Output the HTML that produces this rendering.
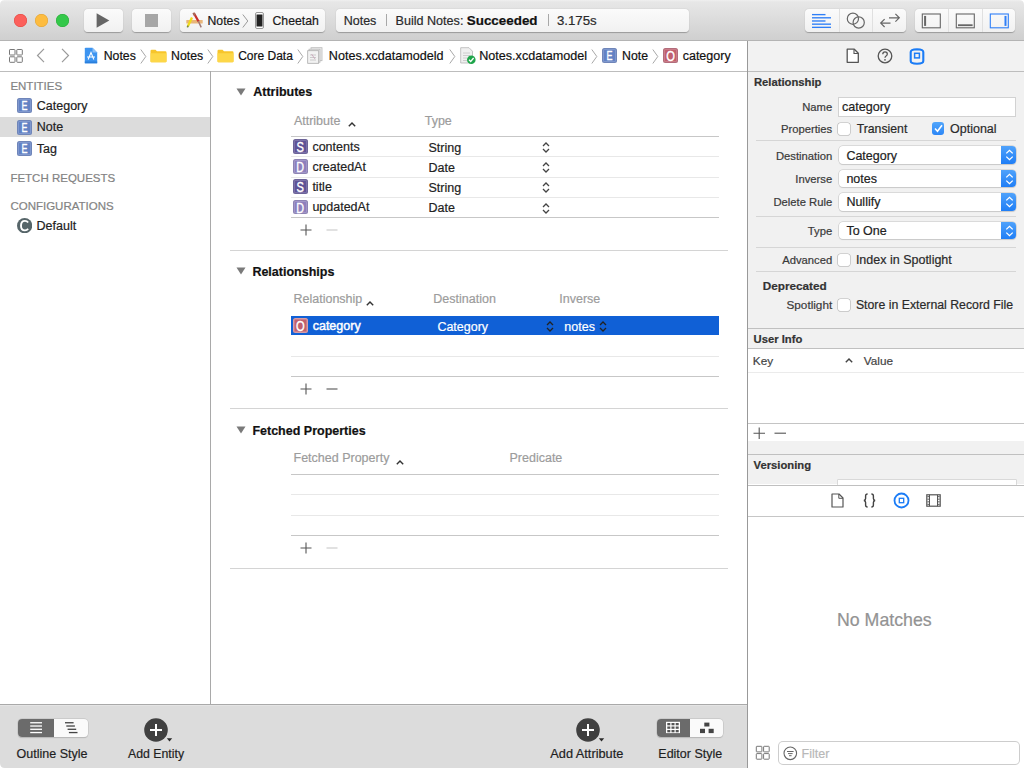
<!DOCTYPE html>
<html><head><meta charset="utf-8"><style>
html,body{margin:0;padding:0;width:1024px;height:768px;overflow:hidden;background:#fff;}
body{position:relative;font-family:"Liberation Sans",sans-serif;}
.t{position:absolute;white-space:nowrap;line-height:1;-webkit-text-stroke:0.2px currentColor;}
</style></head><body>
<div style="position:absolute;left:0px;top:0px;width:1024px;height:40px;background:linear-gradient(#f0f0f0 0px,#e7e7e7 2px,#d0d0d0 39px);"></div>
<div style="position:absolute;left:0px;top:40px;width:1024px;height:1px;background:#b4b4b4;"></div>
<div style="position:absolute;left:14.05px;top:13.95px;width:12.9px;height:12.9px;border-radius:50%;background:#fc605c;box-shadow:inset 0 0 0 0.5px #e0443e;"></div>
<div style="position:absolute;left:35.05px;top:13.95px;width:12.9px;height:12.9px;border-radius:50%;background:#fdbc40;box-shadow:inset 0 0 0 0.5px #dea236;"></div>
<div style="position:absolute;left:56.05px;top:13.95px;width:12.9px;height:12.9px;border-radius:50%;background:#34c84a;box-shadow:inset 0 0 0 0.5px #27aa35;"></div>
<div style="position:absolute;left:84px;top:9px;width:39px;height:23px;border-radius:4px;background:linear-gradient(#fbfbfb,#f1f1f1);box-shadow:0 0.5px 1px rgba(0,0,0,0.28);"></div>
<svg style="position:absolute;left:96px;top:13px" width="14" height="15" viewBox="0 0 14 15"><path d="M0.6 0.3 L13.3 7.5 L0.6 14.7 Z" fill="#666"/></svg>
<div style="position:absolute;left:132px;top:9px;width:39px;height:23px;border-radius:4px;background:linear-gradient(#fbfbfb,#f1f1f1);box-shadow:0 0.5px 1px rgba(0,0,0,0.28);"></div>
<div style="position:absolute;left:145px;top:14px;width:12.6px;height:12.7px;background:#a6a6a6;"></div>
<div style="position:absolute;left:180px;top:9px;width:145px;height:23px;border-radius:4px;background:linear-gradient(#fbfbfb,#f1f1f1);box-shadow:0 0.5px 1px rgba(0,0,0,0.28);"></div>
<svg style="position:absolute;left:184px;top:10px" width="22" height="20" viewBox="0 0 22 20"><rect x="2.3" y="9.9" width="16.4" height="3.6" rx="0.6" fill="#e9b679"/><path d="M9.9 3.3 L14.6 11.5" stroke="#c8302c" stroke-width="2.3" fill="none"/><path d="M14.4 11.2 L17.2 17.4" stroke="#a07a78" stroke-width="1.5" fill="none"/><path d="M9.4 2.8 L10.9 5.6" stroke="#a86a58" stroke-width="2.2" fill="none"/><path d="M8 7.6 L3.9 16.2" stroke="#f0dc1a" stroke-width="2.3" fill="none"/><path d="M4.2 15.6 L3.3 17.3" stroke="#7a8a40" stroke-width="1.6" fill="none"/></svg>
<div class="t" style="left:207.5px;top:14.93px;font-size:12.25px;color:#1a1a1a;font-weight:normal;">Notes</div>
<svg style="position:absolute;left:241.5px;top:13.5px" width="7" height="14" viewBox="0 0 7 14"><path d="M0.8 0.5 L5.8 7.0 L0.8 13.5" fill="none" stroke="#9a9a9a" stroke-width="1"/></svg>
<svg style="position:absolute;left:255px;top:12px" width="9" height="17" viewBox="0 0 9 17"><rect x="0.5" y="0.5" width="8" height="16" rx="1.5" fill="#fff" stroke="#999" stroke-width="1"/><rect x="1.5" y="2.5" width="6" height="12" fill="#222"/></svg>
<div class="t" style="left:272.5px;top:14.93px;font-size:12.25px;color:#1a1a1a;font-weight:normal;">Cheetah</div>
<div style="position:absolute;left:336px;top:9px;width:353px;height:23px;border-radius:4px;background:linear-gradient(#fbfbfb,#f1f1f1);box-shadow:0 0.5px 1px rgba(0,0,0,0.28);"></div>
<div class="t" style="left:343.7px;top:14.62px;font-size:12.5px;color:#2a2a2a;font-weight:normal;">Notes</div>
<div style="position:absolute;left:386px;top:14px;width:1px;height:11.5px;background:#a8a8a8;"></div>
<div class="t" style="left:395.5px;top:15.03px;font-size:12.6px;color:#2a2a2a;font-weight:normal;">Build Notes: </div>
<div class="t" style="left:466.8px;top:14.16px;font-size:13.4px;color:#111;font-weight:bold;">Succeeded</div>
<div style="position:absolute;left:547.5px;top:14px;width:1px;height:11.5px;background:#a8a8a8;"></div>
<div class="t" style="left:556.9px;top:13.98px;font-size:13.25px;color:#2a2a2a;font-weight:normal;">3.175s</div>
<div style="position:absolute;left:805px;top:9px;width:101px;height:23px;border-radius:4px;background:linear-gradient(#fbfbfb,#f1f1f1);box-shadow:0 0.5px 1px rgba(0,0,0,0.28);"></div>
<div style="position:absolute;left:839px;top:9px;width:1px;height:23px;background:#e0e0e0;"></div>
<div style="position:absolute;left:872px;top:9px;width:1px;height:23px;background:#e0e0e0;"></div>
<svg style="position:absolute;left:810px;top:12px" width="24" height="18" viewBox="0 0 24 18"><rect x="2" y="1.95" width="13.5" height="1.35" fill="#2f7ff7"/><rect x="2" y="5.13" width="19" height="1.35" fill="#2f7ff7"/><rect x="2" y="8.31" width="13.5" height="1.35" fill="#2f7ff7"/><rect x="2" y="11.49" width="19" height="1.35" fill="#2f7ff7"/><rect x="2" y="14.67" width="19" height="1.35" fill="#2f7ff7"/></svg>
<svg style="position:absolute;left:844px;top:10px" width="22" height="20" viewBox="0 0 22 20"><circle cx="8.9" cy="8.7" r="5.6" fill="none" stroke="#666" stroke-width="1.2"/><circle cx="14.7" cy="12.5" r="5.6" fill="none" stroke="#666" stroke-width="1.2"/></svg>
<svg style="position:absolute;left:878px;top:11px" width="24" height="18" viewBox="0 0 24 18"><path d="M11 6.8 L21.3 6.8 M17.4 2.9 L21.3 6.8 L17.4 10.7" fill="none" stroke="#666" stroke-width="1.2"/><path d="M12.5 12.1 L2.7 12.1 M6.6 8.2 L2.7 12.1 L6.6 16" fill="none" stroke="#666" stroke-width="1.2"/></svg>
<div style="position:absolute;left:914.5px;top:9px;width:100.5px;height:23px;border-radius:4px;background:linear-gradient(#fbfbfb,#f1f1f1);box-shadow:0 0.5px 1px rgba(0,0,0,0.28);"></div>
<div style="position:absolute;left:948px;top:9px;width:1px;height:23px;background:#e0e0e0;"></div>
<div style="position:absolute;left:982px;top:9px;width:1px;height:23px;background:#e0e0e0;"></div>
<svg style="position:absolute;left:921px;top:12.5px" width="21" height="16" viewBox="0 0 21 16"><rect x="1.3" y="1" width="18" height="13.8" fill="none" stroke="#666" stroke-width="1.1"/><rect x="3.1" y="2.9" width="2" height="10" fill="#666"/></svg>
<svg style="position:absolute;left:955px;top:12.5px" width="21" height="16" viewBox="0 0 21 16"><rect x="1.3" y="1" width="18" height="13.8" fill="none" stroke="#666" stroke-width="1.1"/><rect x="3" y="11.3" width="14.6" height="1.8" fill="#666"/></svg>
<svg style="position:absolute;left:989px;top:12.5px" width="21" height="16" viewBox="0 0 21 16"><rect x="1.3" y="1" width="18" height="13.8" fill="none" stroke="#2f7ff7" stroke-width="1.1"/><rect x="15.5" y="2.9" width="2" height="10" fill="#2f7ff7"/></svg>
<div style="position:absolute;left:0px;top:41px;width:747px;height:30px;background:#fff;"></div>
<div style="position:absolute;left:0px;top:71px;width:747px;height:1px;background:#bdbdbd;"></div>
<svg style="position:absolute;left:8px;top:48px" width="16" height="16" viewBox="0 0 16 16"><rect x="1.5" y="1.5" width="5.5" height="5.5" rx="0.6" fill="none" stroke="#777" stroke-width="1"/><rect x="1.5" y="8.8" width="5.5" height="5.5" rx="0.6" fill="none" stroke="#777" stroke-width="1"/><rect x="8.8" y="1.5" width="5.5" height="5.5" rx="0.6" fill="none" stroke="#777" stroke-width="1"/><rect x="8.8" y="8.8" width="5.5" height="5.5" rx="0.6" fill="none" stroke="#777" stroke-width="1"/></svg>
<svg style="position:absolute;left:36px;top:48px" width="10" height="15" viewBox="0 0 10 15"><path d="M8 0.8 L1.5 7.5 L8 14.2" fill="none" stroke="#9a9a9a" stroke-width="1.2"/></svg>
<svg style="position:absolute;left:60px;top:48px" width="10" height="15" viewBox="0 0 10 15"><path d="M2 0.8 L8.5 7.5 L2 14.2" fill="none" stroke="#9a9a9a" stroke-width="1.2"/></svg>
<svg style="position:absolute;left:84px;top:47px" width="14" height="17" viewBox="0 0 14 17"><path d="M0.8 1.5 Q0.8 0.7 1.6 0.7 L8.5 0.7 L13.2 5.4 L13.2 15.4 Q13.2 16.3 12.4 16.3 L1.6 16.3 Q0.8 16.3 0.8 15.4 Z" fill="#3d94f0"/><path d="M8.5 0.7 L8.5 5.4 L13.2 5.4 Z" fill="#8cc0f7"/><path d="M4.2 12.5 L7 5.5 L9.8 12.5 M3 10 L11 10" stroke="#fff" stroke-width="1.1" fill="none"/><rect x="0.8" y="14.5" width="12.4" height="1.8" fill="#2a7fdc"/></svg>
<div class="t" style="left:103.7px;top:49.99px;font-size:12.3px;color:#111;font-weight:normal;">Notes</div>
<svg style="position:absolute;left:140px;top:48.5px" width="7" height="15" viewBox="0 0 7 15"><path d="M0.8 0.5 L5.8 7.5 L0.8 14.5" fill="none" stroke="#a8a8a8" stroke-width="1"/></svg>
<svg style="position:absolute;left:149.5px;top:48.8px" width="17" height="14" viewBox="0 0 17 14"><path d="M0.5 2 Q0.5 0.8 1.7 0.8 L5.5 0.8 L7 2.3 L15.3 2.3 Q16.5 2.3 16.5 3.5 L16.5 12.3 Q16.5 13.3 15.5 13.3 L1.5 13.3 Q0.5 13.3 0.5 12.3 Z" fill="#f7c52b"/><path d="M0.5 4.2 L16.5 4.2 L16.5 12.3 Q16.5 13.3 15.5 13.3 L1.5 13.3 Q0.5 13.3 0.5 12.3 Z" fill="#fdd748"/></svg>
<div class="t" style="left:171px;top:49.99px;font-size:12.3px;color:#111;font-weight:normal;">Notes</div>
<svg style="position:absolute;left:207px;top:48.5px" width="7" height="15" viewBox="0 0 7 15"><path d="M0.8 0.5 L5.8 7.5 L0.8 14.5" fill="none" stroke="#a8a8a8" stroke-width="1"/></svg>
<svg style="position:absolute;left:216.5px;top:48.8px" width="17" height="14" viewBox="0 0 17 14"><path d="M0.5 2 Q0.5 0.8 1.7 0.8 L5.5 0.8 L7 2.3 L15.3 2.3 Q16.5 2.3 16.5 3.5 L16.5 12.3 Q16.5 13.3 15.5 13.3 L1.5 13.3 Q0.5 13.3 0.5 12.3 Z" fill="#f7c52b"/><path d="M0.5 4.2 L16.5 4.2 L16.5 12.3 Q16.5 13.3 15.5 13.3 L1.5 13.3 Q0.5 13.3 0.5 12.3 Z" fill="#fdd748"/></svg>
<div class="t" style="left:238.2px;top:50.24px;font-size:12.0px;color:#111;font-weight:normal;">Core Data</div>
<svg style="position:absolute;left:297px;top:48.5px" width="7" height="15" viewBox="0 0 7 15"><path d="M0.8 0.5 L5.8 7.5 L0.8 14.5" fill="none" stroke="#a8a8a8" stroke-width="1"/></svg>
<svg style="position:absolute;left:307px;top:47px" width="18" height="17" viewBox="0 0 18 17"><rect x="4" y="0.7" width="11" height="13" fill="#eee" stroke="#b8b8b8" stroke-width="0.8"/><rect x="2" y="2.2" width="11" height="13" fill="#efefef" stroke="#b8b8b8" stroke-width="0.8"/><rect x="0.7" y="3.7" width="11" height="12.6" fill="#f2f2f2" stroke="#aaa" stroke-width="0.8"/><path d="M3 8 L9 8 M3 10.5 L9 10.5 M3 13 L9 13" stroke="#c0c0c0" stroke-width="0.8"/><path d="M4.5 7 L8 12" stroke="#c8a0b8" stroke-width="0.8"/></svg>
<div class="t" style="left:328.8px;top:49.73px;font-size:12.6px;color:#111;font-weight:normal;">Notes.xcdatamodeld</div>
<svg style="position:absolute;left:449px;top:48.5px" width="7" height="15" viewBox="0 0 7 15"><path d="M0.8 0.5 L5.8 7.5 L0.8 14.5" fill="none" stroke="#a8a8a8" stroke-width="1"/></svg>
<svg style="position:absolute;left:459.5px;top:47px" width="16" height="18" viewBox="0 0 16 18"><path d="M0.7 0.7 L9 0.7 L12.5 4.2 L12.5 16 L0.7 16 Z" fill="#f0f0f0" stroke="#b4b4b4" stroke-width="0.8"/><path d="M3 6 L10 6 M3 8.5 L10 8.5 M3 11 L7 11 M3 13.5 L7 13.5" stroke="#c4c4c4" stroke-width="0.8"/><circle cx="11.3" cy="12.8" r="4.3" fill="#1ea54a"/><path d="M9 12.8 L10.7 14.5 L13.6 11" stroke="#fff" stroke-width="1.3" fill="none"/></svg>
<div class="t" style="left:479.2px;top:49.73px;font-size:12.6px;color:#111;font-weight:normal;">Notes.xcdatamodel</div>
<svg style="position:absolute;left:591px;top:48.5px" width="7" height="15" viewBox="0 0 7 15"><path d="M0.8 0.5 L5.8 7.5 L0.8 14.5" fill="none" stroke="#a8a8a8" stroke-width="1"/></svg>
<div style="position:absolute;left:601.7px;top:48.2px;width:15px;height:15px;border-radius:2.5px;background:#6382c4;box-shadow:inset 0 0 0 1px rgba(0,0,30,0.12), inset 0 0 0 2px rgba(255,255,255,0.18);"><svg style="position:absolute;left:0;top:0" width="15" height="15"><text x="7.5" y="11.90" text-anchor="middle" font-family="Liberation Sans" font-size="12.5" fill="#fff" stroke="#fff" stroke-width="0.35" textLength="6.0" lengthAdjust="spacingAndGlyphs">E</text></svg></div>
<div class="t" style="left:622px;top:49.99px;font-size:12.3px;color:#111;font-weight:normal;">Note</div>
<svg style="position:absolute;left:652px;top:48.5px" width="7" height="15" viewBox="0 0 7 15"><path d="M0.8 0.5 L5.8 7.5 L0.8 14.5" fill="none" stroke="#a8a8a8" stroke-width="1"/></svg>
<div style="position:absolute;left:662.6px;top:48.2px;width:15px;height:15px;border-radius:2.5px;background:#c0606e;box-shadow:inset 0 0 0 1px rgba(0,0,30,0.12), inset 0 0 0 2px rgba(255,255,255,0.18);"><svg style="position:absolute;left:0;top:0" width="15" height="15"><text x="7.5" y="13.00" text-anchor="middle" font-family="Liberation Sans" font-size="14" fill="#fff" stroke="#fff" stroke-width="0.35" textLength="8.7" lengthAdjust="spacingAndGlyphs">O</text></svg></div>
<div class="t" style="left:682.7px;top:49.82px;font-size:12.5px;color:#111;font-weight:normal;">category</div>
<div style="position:absolute;left:0px;top:72px;width:210px;height:632px;background:#fff;"></div>
<div style="position:absolute;left:210px;top:71px;width:1px;height:633px;background:#a9a9a9;"></div>
<div class="t" style="left:10.4px;top:80.87px;font-size:11.5px;color:#838383;font-weight:normal;">ENTITIES</div>
<div style="position:absolute;left:0px;top:117px;width:210px;height:20px;background:#dcdcdc;"></div>
<div style="position:absolute;left:17.2px;top:98.3px;width:15px;height:15px;border-radius:2.5px;background:#6382c4;box-shadow:inset 0 0 0 1px rgba(0,0,30,0.12), inset 0 0 0 2px rgba(255,255,255,0.18);"><svg style="position:absolute;left:0;top:0" width="15" height="15"><text x="7.5" y="11.90" text-anchor="middle" font-family="Liberation Sans" font-size="12.5" fill="#fff" stroke="#fff" stroke-width="0.35" textLength="6.0" lengthAdjust="spacingAndGlyphs">E</text></svg></div>
<div class="t" style="left:36.8px;top:100.12px;font-size:12.5px;color:#222;font-weight:normal;">Category</div>
<div style="position:absolute;left:17.2px;top:119.6px;width:15px;height:15px;border-radius:2.5px;background:#6382c4;box-shadow:inset 0 0 0 1px rgba(0,0,30,0.12), inset 0 0 0 2px rgba(255,255,255,0.18);"><svg style="position:absolute;left:0;top:0" width="15" height="15"><text x="7.5" y="11.90" text-anchor="middle" font-family="Liberation Sans" font-size="12.5" fill="#fff" stroke="#fff" stroke-width="0.35" textLength="6.0" lengthAdjust="spacingAndGlyphs">E</text></svg></div>
<div class="t" style="left:36.8px;top:121.42px;font-size:12.5px;color:#222;font-weight:normal;">Note</div>
<div style="position:absolute;left:17.2px;top:141px;width:15px;height:15px;border-radius:2.5px;background:#6382c4;box-shadow:inset 0 0 0 1px rgba(0,0,30,0.12), inset 0 0 0 2px rgba(255,255,255,0.18);"><svg style="position:absolute;left:0;top:0" width="15" height="15"><text x="7.5" y="11.90" text-anchor="middle" font-family="Liberation Sans" font-size="12.5" fill="#fff" stroke="#fff" stroke-width="0.35" textLength="6.0" lengthAdjust="spacingAndGlyphs">E</text></svg></div>
<div class="t" style="left:36.8px;top:142.82px;font-size:12.5px;color:#222;font-weight:normal;">Tag</div>
<div class="t" style="left:10.4px;top:172.87px;font-size:11.5px;color:#838383;font-weight:normal;">FETCH REQUESTS</div>
<div class="t" style="left:10.4px;top:200.57px;font-size:11.5px;color:#838383;font-weight:normal;">CONFIGURATIONS</div>
<svg style="position:absolute;left:17px;top:217.6px" width="15.3" height="15.3" viewBox="0 0 15.3 15.3"><circle cx="7.65" cy="7.65" r="7.65" fill="#566569"/><path d="M11.1 4.5 Q10 2.9 7.9 2.9 Q4 2.9 4 7.65 Q4 12.4 7.9 12.4 Q10 12.4 11.1 10.8" fill="none" stroke="#fff" stroke-width="1.9"/></svg>
<div class="t" style="left:36.6px;top:219.82px;font-size:12.5px;color:#222;font-weight:normal;">Default</div>
<div style="position:absolute;left:211px;top:72px;width:536px;height:632px;background:#fff;"></div>
<div style="position:absolute;left:747px;top:41px;width:1px;height:727px;background:#999;"></div>
<svg style="position:absolute;left:236px;top:88px" width="10" height="8" viewBox="0 0 10 8"><path d="M0.5 0.5 L9.5 0.5 L5 7.5 Z" fill="#7a7a7a"/></svg>
<div class="t" style="left:253.2px;top:86.42px;font-size:12.5px;color:#111;font-weight:bold;">Attributes</div>
<div class="t" style="left:293.9px;top:114.62px;font-size:12.5px;color:#9c9c9c;font-weight:normal;">Attribute</div>
<svg style="position:absolute;left:348px;top:121.5px" width="8" height="5" viewBox="0 0 8 5"><path d="M0.8 4.3 L4 1 L7.2 4.3" fill="none" stroke="#333" stroke-width="1.4"/></svg>
<div class="t" style="left:424.7px;top:114.62px;font-size:12.5px;color:#9c9c9c;font-weight:normal;">Type</div>
<div style="position:absolute;left:291px;top:136px;width:428px;height:1px;background:#c7c7c7;"></div>
<div style="position:absolute;left:293px;top:139.0px;width:14.5px;height:14.5px;border-radius:2.5px;background:#5f5296;box-shadow:inset 0 0 0 1px rgba(0,0,30,0.12), inset 0 0 0 2px rgba(255,255,255,0.18);"><svg style="position:absolute;left:0;top:0" width="14.5" height="14.5"><text x="7.25" y="12.75" text-anchor="middle" font-family="Liberation Sans" font-size="14" fill="#fff" stroke="#fff" stroke-width="0.35" textLength="7.4" lengthAdjust="spacingAndGlyphs">S</text></svg></div>
<div class="t" style="left:312.4px;top:140.82px;font-size:12.5px;color:#222;font-weight:normal;">contents</div>
<div class="t" style="left:428.5px;top:141.82px;font-size:12.5px;color:#222;font-weight:normal;">String</div>
<svg style="position:absolute;left:542px;top:142.0px" width="8" height="11" viewBox="0 0 8 11"><path d="M1 4 L4 1 L7 4 M1 7 L4 10 L7 7" fill="none" stroke="#444" stroke-width="1.3"/></svg>
<div style="position:absolute;left:291px;top:156px;width:428px;height:1px;background:#e8e8e8;"></div>
<div style="position:absolute;left:293px;top:159.2px;width:14.5px;height:14.5px;border-radius:2.5px;background:#8d7fbc;box-shadow:inset 0 0 0 1px rgba(0,0,30,0.12), inset 0 0 0 2px rgba(255,255,255,0.18);"><svg style="position:absolute;left:0;top:0" width="14.5" height="14.5"><text x="7.25" y="12.75" text-anchor="middle" font-family="Liberation Sans" font-size="14" fill="#fff" stroke="#fff" stroke-width="0.35" textLength="7.8" lengthAdjust="spacingAndGlyphs">D</text></svg></div>
<div class="t" style="left:312.4px;top:161.02px;font-size:12.5px;color:#222;font-weight:normal;">createdAt</div>
<div class="t" style="left:428.5px;top:162.02px;font-size:12.5px;color:#222;font-weight:normal;">Date</div>
<svg style="position:absolute;left:542px;top:162.2px" width="8" height="11" viewBox="0 0 8 11"><path d="M1 4 L4 1 L7 4 M1 7 L4 10 L7 7" fill="none" stroke="#444" stroke-width="1.3"/></svg>
<div style="position:absolute;left:291px;top:177px;width:428px;height:1px;background:#e8e8e8;"></div>
<div style="position:absolute;left:293px;top:179.4px;width:14.5px;height:14.5px;border-radius:2.5px;background:#5f5296;box-shadow:inset 0 0 0 1px rgba(0,0,30,0.12), inset 0 0 0 2px rgba(255,255,255,0.18);"><svg style="position:absolute;left:0;top:0" width="14.5" height="14.5"><text x="7.25" y="12.75" text-anchor="middle" font-family="Liberation Sans" font-size="14" fill="#fff" stroke="#fff" stroke-width="0.35" textLength="7.4" lengthAdjust="spacingAndGlyphs">S</text></svg></div>
<div class="t" style="left:312.4px;top:181.22px;font-size:12.5px;color:#222;font-weight:normal;">title</div>
<div class="t" style="left:428.5px;top:182.22px;font-size:12.5px;color:#222;font-weight:normal;">String</div>
<svg style="position:absolute;left:542px;top:182.4px" width="8" height="11" viewBox="0 0 8 11"><path d="M1 4 L4 1 L7 4 M1 7 L4 10 L7 7" fill="none" stroke="#444" stroke-width="1.3"/></svg>
<div style="position:absolute;left:291px;top:197px;width:428px;height:1px;background:#e8e8e8;"></div>
<div style="position:absolute;left:293px;top:199.6px;width:14.5px;height:14.5px;border-radius:2.5px;background:#8d7fbc;box-shadow:inset 0 0 0 1px rgba(0,0,30,0.12), inset 0 0 0 2px rgba(255,255,255,0.18);"><svg style="position:absolute;left:0;top:0" width="14.5" height="14.5"><text x="7.25" y="12.75" text-anchor="middle" font-family="Liberation Sans" font-size="14" fill="#fff" stroke="#fff" stroke-width="0.35" textLength="7.8" lengthAdjust="spacingAndGlyphs">D</text></svg></div>
<div class="t" style="left:312.4px;top:201.42px;font-size:12.5px;color:#222;font-weight:normal;">updatedAt</div>
<div class="t" style="left:428.5px;top:202.42px;font-size:12.5px;color:#222;font-weight:normal;">Date</div>
<svg style="position:absolute;left:542px;top:202.6px" width="8" height="11" viewBox="0 0 8 11"><path d="M1 4 L4 1 L7 4 M1 7 L4 10 L7 7" fill="none" stroke="#444" stroke-width="1.3"/></svg>
<div style="position:absolute;left:291px;top:217px;width:428px;height:1px;background:#c7c7c7;"></div>
<svg style="position:absolute;left:299.5px;top:224px" width="12" height="12" viewBox="0 0 12 12"><path d="M6 0.5 L6 11.5 M0.5 6 L11.5 6" stroke="#555" stroke-width="1.1"/></svg>
<svg style="position:absolute;left:325.5px;top:224px" width="12" height="12" viewBox="0 0 12 12"><path d="M0.5 6 L11.5 6" stroke="#c8c8c8" stroke-width="1.1"/></svg>
<div style="position:absolute;left:230px;top:250px;width:498px;height:1px;background:#d4d4d4;"></div>
<svg style="position:absolute;left:236px;top:267px" width="10" height="8" viewBox="0 0 10 8"><path d="M0.5 0.5 L9.5 0.5 L5 7.5 Z" fill="#7a7a7a"/></svg>
<div class="t" style="left:252.4px;top:265.82px;font-size:12.5px;color:#111;font-weight:bold;">Relationships</div>
<div class="t" style="left:293.5px;top:293.22px;font-size:12.5px;color:#9c9c9c;font-weight:normal;">Relationship</div>
<svg style="position:absolute;left:366px;top:300.5px" width="8" height="5" viewBox="0 0 8 5"><path d="M0.8 4.3 L4 1 L7.2 4.3" fill="none" stroke="#333" stroke-width="1.4"/></svg>
<div class="t" style="left:433.3px;top:293.22px;font-size:12.5px;color:#9c9c9c;font-weight:normal;">Destination</div>
<div class="t" style="left:559.3px;top:293.22px;font-size:12.5px;color:#9c9c9c;font-weight:normal;">Inverse</div>
<div style="position:absolute;left:291px;top:316px;width:428px;height:19px;background:#1060d6;"></div>
<div style="position:absolute;left:293.3px;top:318.3px;width:14.5px;height:14.5px;border-radius:2.5px;background:#c0606e;box-shadow:inset 0 0 0 1px rgba(255,255,255,0.25), inset 0 0 0 2px rgba(255,255,255,0.18);"><svg style="position:absolute;left:0;top:0" width="14.5" height="14.5"><text x="7.25" y="12.75" text-anchor="middle" font-family="Liberation Sans" font-size="14" fill="#fff" stroke="#fff" stroke-width="0.35" textLength="8.7" lengthAdjust="spacingAndGlyphs">O</text></svg></div>
<div class="t" style="left:312.7px;top:320.02px;font-size:12.5px;color:#fff;font-weight:normal;-webkit-text-stroke:0.45px #fff;">category</div>
<div class="t" style="left:437.4px;top:321.02px;font-size:12.5px;color:#fff;font-weight:normal;">Category</div>
<svg style="position:absolute;left:546px;top:320.5px" width="8" height="11" viewBox="0 0 8 11"><path d="M1 4 L4 1 L7 4 M1 7 L4 10 L7 7" fill="none" stroke="#222" stroke-width="1.3"/></svg>
<div class="t" style="left:564.3px;top:321.02px;font-size:12.5px;color:#fff;font-weight:normal;">notes</div>
<svg style="position:absolute;left:598.5px;top:320.5px" width="8" height="11" viewBox="0 0 8 11"><path d="M1 4 L4 1 L7 4 M1 7 L4 10 L7 7" fill="none" stroke="#222" stroke-width="1.3"/></svg>
<div style="position:absolute;left:291px;top:356px;width:428px;height:1px;background:#e8e8e8;"></div>
<div style="position:absolute;left:291px;top:376px;width:428px;height:1px;background:#c7c7c7;"></div>
<svg style="position:absolute;left:299.5px;top:383px" width="12" height="12" viewBox="0 0 12 12"><path d="M6 0.5 L6 11.5 M0.5 6 L11.5 6" stroke="#555" stroke-width="1.1"/></svg>
<svg style="position:absolute;left:325.5px;top:383px" width="12" height="12" viewBox="0 0 12 12"><path d="M0.5 6 L11.5 6" stroke="#555" stroke-width="1.1"/></svg>
<div style="position:absolute;left:230px;top:408px;width:498px;height:1px;background:#d4d4d4;"></div>
<svg style="position:absolute;left:236px;top:426px" width="10" height="8" viewBox="0 0 10 8"><path d="M0.5 0.5 L9.5 0.5 L5 7.5 Z" fill="#7a7a7a"/></svg>
<div class="t" style="left:252.4px;top:424.52px;font-size:12.5px;color:#111;font-weight:bold;">Fetched Properties</div>
<div class="t" style="left:293.5px;top:452.02px;font-size:12.5px;color:#9c9c9c;font-weight:normal;">Fetched Property</div>
<svg style="position:absolute;left:396px;top:459.5px" width="8" height="5" viewBox="0 0 8 5"><path d="M0.8 4.3 L4 1 L7.2 4.3" fill="none" stroke="#333" stroke-width="1.4"/></svg>
<div class="t" style="left:509.5px;top:452.02px;font-size:12.5px;color:#9c9c9c;font-weight:normal;">Predicate</div>
<div style="position:absolute;left:291px;top:474px;width:428px;height:1px;background:#c7c7c7;"></div>
<div style="position:absolute;left:291px;top:494px;width:428px;height:1px;background:#e8e8e8;"></div>
<div style="position:absolute;left:291px;top:515px;width:428px;height:1px;background:#e8e8e8;"></div>
<div style="position:absolute;left:291px;top:535px;width:428px;height:1px;background:#c7c7c7;"></div>
<svg style="position:absolute;left:299.5px;top:542px" width="12" height="12" viewBox="0 0 12 12"><path d="M6 0.5 L6 11.5 M0.5 6 L11.5 6" stroke="#555" stroke-width="1.1"/></svg>
<svg style="position:absolute;left:325.5px;top:542px" width="12" height="12" viewBox="0 0 12 12"><path d="M0.5 6 L11.5 6" stroke="#c8c8c8" stroke-width="1.1"/></svg>
<div style="position:absolute;left:230px;top:568px;width:498px;height:1px;background:#d4d4d4;"></div>
<div style="position:absolute;left:0px;top:704px;width:747px;height:64px;background:#dcdcdc;"></div>
<div style="position:absolute;left:0px;top:704px;width:747px;height:1px;background:#a9a9a9;"></div>
<div style="position:absolute;left:0px;top:705px;width:747px;height:1px;background:#e4e4e4;"></div>
<div style="position:absolute;left:748px;top:41px;width:276px;height:30px;background:#f2f2f2;"></div>
<div style="position:absolute;left:748px;top:71px;width:276px;height:1px;background:#bdbdbd;"></div>
<div style="position:absolute;left:748px;top:72px;width:276px;height:412px;background:#f1f1f1;"></div>
<div style="position:absolute;left:748px;top:485px;width:276px;height:283px;background:#fff;"></div>
<svg style="position:absolute;left:846px;top:48px" width="14" height="16" viewBox="0 0 14 16"><path d="M1.2 1.2 L8.3 1.2 L12.3 5.2 L12.3 14.3 L1.2 14.3 Z" fill="#fff" stroke="#555" stroke-width="1.3" stroke-linejoin="round"/><path d="M8 1.2 L8 5.5 L12.3 5.5" fill="none" stroke="#555" stroke-width="1.1"/></svg>
<svg style="position:absolute;left:876.5px;top:48px" width="16" height="16" viewBox="0 0 16 16"><circle cx="8" cy="8" r="6.8" fill="none" stroke="#555" stroke-width="1.3"/><path d="M5.8 6.2 Q5.8 3.8 8 3.8 Q10.3 3.8 10.3 6 Q10.3 7.4 8.8 8.2 Q8 8.7 8 9.8" fill="none" stroke="#555" stroke-width="1.3"/><circle cx="8" cy="11.8" r="0.85" fill="#555"/></svg>
<svg style="position:absolute;left:909px;top:47.5px" width="16" height="17" viewBox="0 0 16 17"><path d="M1.7 4 Q1.7 1.3 8 1.2 Q14.3 1.3 14.3 4 L14.3 13 Q14.3 15.7 8 15.8 Q1.7 15.7 1.7 13 Z" fill="none" stroke="#1b7cf6" stroke-width="2.1"/><rect x="5.6" y="5.3" width="4.8" height="4.6" fill="none" stroke="#1b7cf6" stroke-width="1.5"/></svg>
<div class="t" style="left:753.9px;top:77.08px;font-size:11.25px;color:#333;font-weight:bold;">Relationship</div>
<div class="t" style="right:191.79999999999995px;top:102.08px;font-size:11.25px;color:#3a3a3a;font-weight:normal;">Name</div>
<div style="position:absolute;left:839px;top:97.5px;width:176px;height:18px;background:#fff;box-shadow:0 0 0 1px #d2d2d2;"></div>
<div class="t" style="left:842px;top:101.43px;font-size:12.6px;color:#222;font-weight:normal;">category</div>
<div class="t" style="right:191.79999999999995px;top:123.58px;font-size:11.25px;color:#3a3a3a;font-weight:normal;">Properties</div>
<div style="position:absolute;left:838px;top:123px;width:12px;height:12px;border-radius:2.5px;background:#fff;box-shadow:0 0 0 0.6px #b4b4b4, 0 0.6px 0.6px rgba(0,0,0,0.1);"></div>
<div class="t" style="left:856.7px;top:122.73px;font-size:12.25px;color:#2a2a2a;font-weight:normal;">Transient</div>
<div style="position:absolute;left:931.8px;top:122.2px;width:12.5px;height:12.5px;border-radius:3px;background:linear-gradient(#52a6fb,#2b86f7);"></div>
<svg style="position:absolute;left:931.8px;top:122.2px" width="13" height="13" viewBox="0 0 13 13"><path d="M3 6.5 L5.5 9.2 L10 3.2" fill="none" stroke="#fff" stroke-width="1.6"/></svg>
<div class="t" style="left:950px;top:122.52px;font-size:12.5px;color:#2a2a2a;font-weight:normal;">Optional</div>
<div style="position:absolute;left:756px;top:140px;width:260px;height:1px;background:#d6d6d6;"></div>
<div class="t" style="right:191.79999999999995px;top:150.58px;font-size:11.25px;color:#3a3a3a;font-weight:normal;">Destination</div>
<div style="position:absolute;left:838.5px;top:146.2px;width:177.5px;height:17.5px;border-radius:4px;background:#fff;box-shadow:0 0 0 0.6px #c6c6c6, 0 0.8px 1px rgba(0,0,0,0.15);"></div>
<div style="position:absolute;left:1001px;top:146.2px;width:15px;height:17.5px;border-radius:0 4px 4px 0;background:linear-gradient(#4fa2fb,#1f7ef6);"></div>
<svg style="position:absolute;left:1004.5px;top:149.2px" width="9" height="12" viewBox="0 0 9 12"><path d="M1.3 4.4 L4.5 1.3 L7.7 4.4 M1.3 7.6 L4.5 10.7 L7.7 7.6" fill="none" stroke="#fff" stroke-width="1.3"/></svg>
<div class="t" style="left:846.4px;top:149.62px;font-size:12.5px;color:#222;font-weight:normal;">Category</div>
<div class="t" style="right:191.79999999999995px;top:173.88px;font-size:11.25px;color:#3a3a3a;font-weight:normal;">Inverse</div>
<div style="position:absolute;left:838.5px;top:169.5px;width:177.5px;height:17.5px;border-radius:4px;background:#fff;box-shadow:0 0 0 0.6px #c6c6c6, 0 0.8px 1px rgba(0,0,0,0.15);"></div>
<div style="position:absolute;left:1001px;top:169.5px;width:15px;height:17.5px;border-radius:0 4px 4px 0;background:linear-gradient(#4fa2fb,#1f7ef6);"></div>
<svg style="position:absolute;left:1004.5px;top:172.5px" width="9" height="12" viewBox="0 0 9 12"><path d="M1.3 4.4 L4.5 1.3 L7.7 4.4 M1.3 7.6 L4.5 10.7 L7.7 7.6" fill="none" stroke="#fff" stroke-width="1.3"/></svg>
<div class="t" style="left:846.4px;top:172.92px;font-size:12.5px;color:#222;font-weight:normal;">notes</div>
<div class="t" style="right:191.79999999999995px;top:197.38px;font-size:11.25px;color:#3a3a3a;font-weight:normal;">Delete Rule</div>
<div style="position:absolute;left:838.5px;top:193px;width:177.5px;height:17.5px;border-radius:4px;background:#fff;box-shadow:0 0 0 0.6px #c6c6c6, 0 0.8px 1px rgba(0,0,0,0.15);"></div>
<div style="position:absolute;left:1001px;top:193px;width:15px;height:17.5px;border-radius:0 4px 4px 0;background:linear-gradient(#4fa2fb,#1f7ef6);"></div>
<svg style="position:absolute;left:1004.5px;top:196px" width="9" height="12" viewBox="0 0 9 12"><path d="M1.3 4.4 L4.5 1.3 L7.7 4.4 M1.3 7.6 L4.5 10.7 L7.7 7.6" fill="none" stroke="#fff" stroke-width="1.3"/></svg>
<div class="t" style="left:846.4px;top:196.42px;font-size:12.5px;color:#222;font-weight:normal;">Nullify</div>
<div style="position:absolute;left:756px;top:215.5px;width:260px;height:1px;background:#d6d6d6;"></div>
<div class="t" style="right:191.79999999999995px;top:226.08px;font-size:11.25px;color:#3a3a3a;font-weight:normal;">Type</div>
<div style="position:absolute;left:838.5px;top:221.8px;width:177.5px;height:17.5px;border-radius:4px;background:#fff;box-shadow:0 0 0 0.6px #c6c6c6, 0 0.8px 1px rgba(0,0,0,0.15);"></div>
<div style="position:absolute;left:1001px;top:221.8px;width:15px;height:17.5px;border-radius:0 4px 4px 0;background:linear-gradient(#4fa2fb,#1f7ef6);"></div>
<svg style="position:absolute;left:1004.5px;top:224.8px" width="9" height="12" viewBox="0 0 9 12"><path d="M1.3 4.4 L4.5 1.3 L7.7 4.4 M1.3 7.6 L4.5 10.7 L7.7 7.6" fill="none" stroke="#fff" stroke-width="1.3"/></svg>
<div class="t" style="left:846.4px;top:225.22px;font-size:12.5px;color:#222;font-weight:normal;">To One</div>
<div style="position:absolute;left:756px;top:246.5px;width:260px;height:1px;background:#d6d6d6;"></div>
<div class="t" style="right:191.79999999999995px;top:254.58px;font-size:11.25px;color:#3a3a3a;font-weight:normal;">Advanced</div>
<div style="position:absolute;left:838px;top:254.3px;width:12px;height:12px;border-radius:2.5px;background:#fff;box-shadow:0 0 0 0.6px #b4b4b4, 0 0.6px 0.6px rgba(0,0,0,0.1);"></div>
<div class="t" style="left:855.9px;top:253.52px;font-size:12.5px;color:#2a2a2a;font-weight:normal;">Index in Spotlight</div>
<div style="position:absolute;left:756px;top:271px;width:260px;height:1px;background:#d6d6d6;"></div>
<div class="t" style="left:762.7px;top:279.65px;font-size:11.75px;color:#333;font-weight:bold;">Deprecated</div>
<div class="t" style="right:191.79999999999995px;top:299.45px;font-size:11.75px;color:#3a3a3a;font-weight:normal;">Spotlight</div>
<div style="position:absolute;left:838px;top:299.3px;width:12px;height:12px;border-radius:2.5px;background:#fff;box-shadow:0 0 0 0.6px #b4b4b4, 0 0.6px 0.6px rgba(0,0,0,0.1);"></div>
<div class="t" style="left:855.9px;top:298.99px;font-size:12.3px;color:#2a2a2a;font-weight:normal;">Store in External Record File</div>
<div style="position:absolute;left:748px;top:328px;width:276px;height:1px;background:#c0c0c0;"></div>
<div class="t" style="left:753.6px;top:333.78px;font-size:11.25px;color:#333;font-weight:bold;">User Info</div>
<div style="position:absolute;left:748px;top:348px;width:276px;height:1px;background:#c0c0c0;"></div>
<div style="position:absolute;left:748px;top:349px;width:276px;height:92px;background:#fff;"></div>
<div class="t" style="left:752.8px;top:354.95px;font-size:11.75px;color:#444;font-weight:normal;">Key</div>
<svg style="position:absolute;left:844.5px;top:357.5px" width="8" height="5" viewBox="0 0 8 5"><path d="M0.8 4.3 L4 1 L7.2 4.3" fill="none" stroke="#444" stroke-width="1.4"/></svg>
<div class="t" style="left:863.8px;top:354.95px;font-size:11.75px;color:#444;font-weight:normal;">Value</div>
<div style="position:absolute;left:748px;top:372px;width:276px;height:1px;background:#ebebeb;"></div>
<div style="position:absolute;left:748px;top:423px;width:276px;height:1px;background:#c4c4c4;"></div>
<svg style="position:absolute;left:752.5px;top:427px" width="13" height="13" viewBox="0 0 13 13"><path d="M6.2 0.5 L6.2 12 M0.5 6.2 L12 6.2" stroke="#555" stroke-width="1.1"/></svg>
<svg style="position:absolute;left:773.8px;top:427px" width="13" height="13" viewBox="0 0 13 13"><path d="M0.5 6.2 L12 6.2" stroke="#555" stroke-width="1.1"/></svg>
<div style="position:absolute;left:748px;top:454px;width:276px;height:1px;background:#c0c0c0;"></div>
<div class="t" style="left:753.5px;top:459.68px;font-size:11.25px;color:#333;font-weight:bold;">Versioning</div>
<div style="position:absolute;left:838.4px;top:479.6px;width:178px;height:6px;background:#fff;box-shadow:0 0 0 0.6px #c8c8c8;"></div>
<div style="position:absolute;left:748px;top:484.5px;width:276px;height:1.2px;background:#c0c0c0;"></div>
<div style="position:absolute;left:748px;top:485.7px;width:276px;height:30px;background:#fff;"></div>
<div style="position:absolute;left:748px;top:515.5px;width:276px;height:1.2px;background:#c6c6c6;"></div>
<svg style="position:absolute;left:831px;top:493px" width="14" height="15" viewBox="0 0 14 15"><path d="M1 1 L8 1 L12 5 L12 14 L1 14 Z" fill="none" stroke="#555" stroke-width="1.2" stroke-linejoin="round"/><path d="M7.8 1 L7.8 5.3 L12 5.3" fill="none" stroke="#555" stroke-width="1"/></svg>
<svg style="position:absolute;left:863px;top:493px" width="13" height="15" viewBox="0 0 13 15"><path d="M4.6 1 Q2.6 1 2.6 3 L2.6 5.6 Q2.6 7.2 0.9 7.5 Q2.6 7.8 2.6 9.4 L2.6 12 Q2.6 14 4.6 14 M8.4 1 Q10.4 1 10.4 3 L10.4 5.6 Q10.4 7.2 12.1 7.5 Q10.4 7.8 10.4 9.4 L10.4 12 Q10.4 14 8.4 14" fill="none" stroke="#444" stroke-width="1.4"/></svg>
<svg style="position:absolute;left:893px;top:492px" width="17" height="17" viewBox="0 0 17 17"><circle cx="8.5" cy="8.5" r="7" fill="none" stroke="#1b7cf6" stroke-width="1.8"/><rect x="6.3" y="6.3" width="4.4" height="4.4" fill="none" stroke="#1b7cf6" stroke-width="1.3"/></svg>
<svg style="position:absolute;left:926px;top:494px" width="15" height="13" viewBox="0 0 15 13"><rect x="0.8" y="0.8" width="13.4" height="11.4" fill="none" stroke="#555" stroke-width="1.2"/><path d="M3.5 0.8 L3.5 12.2 M11.5 0.8 L11.5 12.2" stroke="#555" stroke-width="1"/><rect x="1.5" y="2.0" width="1.3" height="1.2" fill="#555"/><rect x="12.2" y="2.0" width="1.3" height="1.2" fill="#555"/><rect x="1.5" y="4.6" width="1.3" height="1.2" fill="#555"/><rect x="12.2" y="4.6" width="1.3" height="1.2" fill="#555"/><rect x="1.5" y="7.2" width="1.3" height="1.2" fill="#555"/><rect x="12.2" y="7.2" width="1.3" height="1.2" fill="#555"/><rect x="1.5" y="9.8" width="1.3" height="1.2" fill="#555"/><rect x="12.2" y="9.8" width="1.3" height="1.2" fill="#555"/></svg>
<div class="t" style="left:837px;top:612.37px;font-size:17.75px;color:#939393;font-weight:normal;">No Matches</div>
<svg style="position:absolute;left:755px;top:745px" width="16" height="16" viewBox="0 0 16 16"><rect x="1.3" y="1.3" width="5.6" height="5.6" rx="0.6" fill="none" stroke="#777" stroke-width="1"/><rect x="1.3" y="8.6" width="5.6" height="5.6" rx="0.6" fill="none" stroke="#777" stroke-width="1"/><rect x="8.6" y="1.3" width="5.6" height="5.6" rx="0.6" fill="none" stroke="#777" stroke-width="1"/><rect x="8.6" y="8.6" width="5.6" height="5.6" rx="0.6" fill="none" stroke="#777" stroke-width="1"/></svg>
<div style="position:absolute;left:778.5px;top:742px;width:240px;height:22px;border-radius:4px;background:#fff;box-shadow:0 0 0 1px #cdcdcd;"></div>
<svg style="position:absolute;left:782.5px;top:746px" width="15" height="15" viewBox="0 0 15 15"><circle cx="7.3" cy="7.3" r="6.3" fill="none" stroke="#666" stroke-width="1.1"/><path d="M4 5.5 L10.6 5.5 M5 7.6 L9.6 7.6 M6 9.7 L8.6 9.7" stroke="#666" stroke-width="1"/></svg>
<div class="t" style="left:801.6px;top:748.02px;font-size:12.5px;color:#b8b8b8;font-weight:normal;">Filter</div>
<div style="position:absolute;left:18px;top:718.7px;width:70px;height:18px;border-radius:4px;background:#fafafa;box-shadow:0 0 0 0.5px #c0c0c0, 0 0.5px 1px rgba(0,0,0,0.2);"></div>
<div style="position:absolute;left:18px;top:718.7px;width:36px;height:18px;border-radius:4px 0 0 4px;background:#6b6b6b;"></div>
<svg style="position:absolute;left:29px;top:720px" width="16" height="15" viewBox="0 0 16 15"><rect x="1.2" y="2.10" width="11.8" height="1.3" fill="#fff"/><rect x="1.2" y="5.37" width="11.8" height="1.3" fill="#fff"/><rect x="1.2" y="8.64" width="11.8" height="1.3" fill="#fff"/><rect x="1.2" y="11.91" width="11.8" height="1.3" fill="#fff"/></svg>
<svg style="position:absolute;left:63px;top:720px" width="16" height="15" viewBox="0 0 16 15"><rect x="2.0" y="2.10" width="8.6" height="1.3" fill="#444"/><rect x="3.3" y="5.37" width="8.6" height="1.3" fill="#444"/><rect x="4.6" y="8.64" width="8.6" height="1.3" fill="#444"/><rect x="5.9" y="11.91" width="8.6" height="1.3" fill="#444"/></svg>
<div class="t" style="left:16.6px;top:747.62px;font-size:12.5px;color:#1f1f1f;font-weight:normal;">Outline Style</div>
<svg style="position:absolute;left:144px;top:718px" width="30" height="26" viewBox="0 0 30 26"><circle cx="12" cy="12" r="11.8" fill="#404040"/><path d="M12 6 L12 18 M6 12 L18 12" stroke="#fff" stroke-width="2"/><path d="M22.8 20.2 L28.2 20.2 L25.5 23.6 Z" fill="#2a2a2a"/></svg>
<div class="t" style="left:128px;top:747.79px;font-size:12.3px;color:#1f1f1f;font-weight:normal;">Add Entity</div>
<svg style="position:absolute;left:575.9px;top:718px" width="30" height="26" viewBox="0 0 30 26"><circle cx="12" cy="12" r="11.8" fill="#404040"/><path d="M12 6 L12 18 M6 12 L18 12" stroke="#fff" stroke-width="2"/><path d="M22.8 20.2 L28.2 20.2 L25.5 23.6 Z" fill="#2a2a2a"/></svg>
<div class="t" style="left:550.3px;top:748.11px;font-size:12.75px;color:#1f1f1f;font-weight:normal;">Add Attribute</div>
<div style="position:absolute;left:657px;top:718.7px;width:66px;height:18px;border-radius:4px;background:#fafafa;box-shadow:0 0 0 0.5px #c0c0c0, 0 0.5px 1px rgba(0,0,0,0.2);"></div>
<div style="position:absolute;left:657px;top:718.7px;width:32.5px;height:18px;border-radius:4px 0 0 4px;background:#6b6b6b;"></div>
<svg style="position:absolute;left:665px;top:721px" width="16" height="13" viewBox="0 0 16 13"><rect x="1" y="0.8" width="14" height="11.3" fill="#fff"/><rect x="2.3" y="2.0" width="3" height="2.3" fill="#555"/><rect x="2.3" y="5.5" width="3" height="2.3" fill="#555"/><rect x="2.3" y="9.0" width="3" height="2.3" fill="#555"/><rect x="6.5" y="2.0" width="3" height="2.3" fill="#555"/><rect x="6.5" y="5.5" width="3" height="2.3" fill="#555"/><rect x="6.5" y="9.0" width="3" height="2.3" fill="#555"/><rect x="10.7" y="2.0" width="3" height="2.3" fill="#555"/><rect x="10.7" y="5.5" width="3" height="2.3" fill="#555"/><rect x="10.7" y="9.0" width="3" height="2.3" fill="#555"/></svg>
<svg style="position:absolute;left:698px;top:721px" width="18" height="14" viewBox="0 0 18 14"><rect x="6.3" y="1.6" width="5.1" height="3.9" fill="#444"/><rect x="2" y="7.8" width="5" height="4.3" fill="#444"/><rect x="10.6" y="7.8" width="5.1" height="4.3" fill="#444"/></svg>
<div class="t" style="left:658.3px;top:747.62px;font-size:12.5px;color:#1f1f1f;font-weight:normal;">Editor Style</div>
<svg style="position:absolute;left:0px;top:0px" width="5" height="5" viewBox="0 0 5 5"><path d="M0 0 L5 0 Q0 0 0 5 Z" fill="#fff"/></svg>
<svg style="position:absolute;left:1019px;top:0px" width="5" height="5" viewBox="0 0 5 5"><path d="M5 0 L0 0 Q5 0 5 5 Z" fill="#fff"/></svg>
<svg style="position:absolute;left:0px;top:763px" width="5" height="5" viewBox="0 0 5 5"><path d="M0 5 L0 0 Q0 5 5 5 Z" fill="#fff"/></svg>
<svg style="position:absolute;left:1019px;top:763px" width="5" height="5" viewBox="0 0 5 5"><path d="M5 5 L5 0 Q5 5 0 5 Z" fill="#fff"/></svg>
</body></html>
